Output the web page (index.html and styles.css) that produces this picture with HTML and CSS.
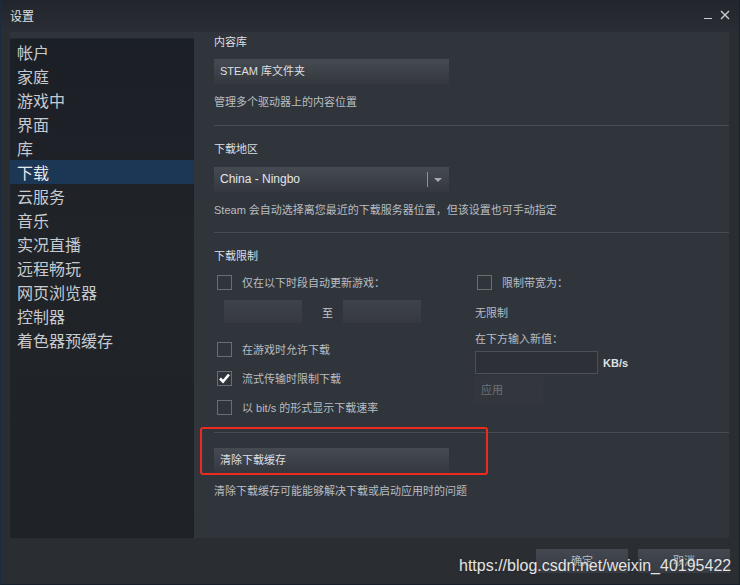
FILE: index.html
```html
<!DOCTYPE html>
<html lang="zh-CN">
<head>
    <meta charset="UTF-8">
    <title>设置</title>
    <link rel="stylesheet" href="styles.css">
</head>
<body>
    <div class="window">
        <div class="titlebar">
            <span class="title">设置</span>
            <div class="controls">
                <span class="min"></span>
                <svg class="close" width="10" height="10" viewBox="0 0 10 10"><path d="M1 1 L9 9 M9 1 L1 9" stroke="#c9ccd0" stroke-width="1.4"/></svg>
            </div>
        </div>

        <div class="main">
            <div class="sidebar">
                <div class="nav-item">帐户</div>
                <div class="nav-item">家庭</div>
                <div class="nav-item">游戏中</div>
                <div class="nav-item">界面</div>
                <div class="nav-item">库</div>
                <div class="nav-item active">下载</div>
                <div class="nav-item">云服务</div>
                <div class="nav-item">音乐</div>
                <div class="nav-item">实况直播</div>
                <div class="nav-item">远程畅玩</div>
                <div class="nav-item">网页浏览器</div>
                <div class="nav-item">控制器</div>
                <div class="nav-item">着色器预缓存</div>
            </div>

            <div class="panel">
                <div class="section first">
                    <div class="heading">内容库</div>
                    <div class="btn wide">STEAM 库文件夹</div>
                    <div class="desc">管理多个驱动器上的内容位置</div>
                </div>
                <div class="sep sep-first"></div>

                <div class="section">
                    <div class="heading">下载地区</div>
                    <div class="btn wide select">
                        <span class="select-text">China - Ningbo</span>
                        <span class="select-divider"></span>
                        <span class="select-arrow"></span>
                    </div>
                    <div class="desc">Steam 会自动选择离您最近的下载服务器位置，但该设置也可手动指定</div>
                </div>
                <div class="sep"></div>

                <div class="section">
                    <div class="heading">下载限制</div>
                    <div class="limits">
                        <div class="col-left">
                            <div class="check-row"><span class="checkbox"></span>仅在以下时段自动更新游戏：</div>
                            <div class="time-row">
                                <span class="time-box"></span>
                                <span class="to">至</span>
                                <span class="time-box"></span>
                            </div>
                            <div class="check-row gap-big"><span class="checkbox"></span>在游戏时允许下载</div>
                            <div class="check-row"><span class="checkbox checked"><svg width="15" height="15" viewBox="0 0 15 15"><path d="M3 7.5 L6 10.5 L12 3.5" fill="none" stroke="#fff" stroke-width="2.6"/></svg></span>流式传输时限制下载</div>
                            <div class="check-row"><span class="checkbox"></span>以 bit/s 的形式显示下载速率</div>
                        </div>
                        <div class="col-right">
                            <div class="check-row"><span class="checkbox"></span>限制带宽为：</div>
                            <div class="plain first-plain">无限制</div>
                            <div class="plain">在下方输入新值：</div>
                            <div class="rate-row">
                                <span class="rate-input"></span>
                                <span class="unit">KB/s</span>
                            </div>
                            <div class="apply">应用</div>
                        </div>
                    </div>
                </div>
                <div class="sep sep-cache"></div>

                <div class="section">
                    <div class="btn wide cache-btn">清除下载缓存</div>
                    <div class="desc">清除下载缓存可能能够解决下载或启动应用时的问题</div>
                </div>
            </div>
        </div>

        <div class="footer">
            <div class="btn foot-btn">确定</div>
            <div class="btn foot-btn">取消</div>
        </div>

        <div class="highlight"></div>
        <div class="watermark">https://blog.csdn.net/weixin_40195422</div>
    </div>
</body>
</html>
```

FILE: styles.css
```css
body {
    margin: 0;
    background-color: #2a2d32;
    font-family: "Liberation Sans", "Noto Sans CJK SC", sans-serif;
}
.window {
    position: relative;
    width: 740px;
    height: 585px;
    box-sizing: border-box;
    border: 1px solid #18202c;
    border-left-color: #1c2b40;
    border-top: none;
    background-color: #2a2d32;
    display: flex;
    flex-direction: column;
}
.titlebar {
    height: 32px;
    flex-shrink: 0;
    background: linear-gradient(#22262c, #2a2d33);
    display: flex;
    align-items: center;
    justify-content: space-between;
    padding: 0 9px 0 9px;
}
.title {
    color: #dfe2e5;
    font-size: 12px;
    margin-top: -1px;
}
.controls {
    display: flex;
    align-items: center;
    gap: 8px;
    margin-top: -3px;
}
.min {
    width: 8px;
    height: 1.5px;
    background-color: #c9ccd0;
    margin-top: 8px;
}
.main {
    height: 506px;
    display: flex;
    padding: 0 10px 0 9px;
}
.sidebar {
    width: 184px;
    flex-shrink: 0;
    padding-top: 8px;
    box-sizing: border-box;
    background: linear-gradient(#2f333a 0, #2f333a 6px, #1b1f26 7px, #202328 200px, #1f2227 100%);
    font-family: "Noto Sans CJK SC", sans-serif;
}
.nav-item {
    height: 24px;
    line-height: 24px;
    padding-left: 7px;
    font-size: 16px;
    color: #c7cbd0;
}
.nav-item.active {
    background-color: #1c3756;
    color: #e4e8ec;
}
.panel {
    flex: 1;
    background-color: #30343b;
    font-size: 11px;
    color: #b9bdc1;
}
.section {
    padding-left: 20px;
}
.section.first {
    padding-top: 2px;
}
.heading {
    line-height: 16px;
    color: #dcdfe2;
    margin-top: 15px;
}
.first .heading {
    margin-top: 0;
}
.btn {
    background: linear-gradient(#464a52, #34383e);
    color: #dcdfe2;
    box-sizing: border-box;
}
.btn.wide {
    width: 235px;
    height: 25px;
    line-height: 25px;
    padding-left: 6px;
    margin-top: 9px;
}
.select {
    position: relative;
    display: flex;
    align-items: center;
    margin-top: 10px !important;
}
.select-text {
    flex: 1;
    font-size: 12px;
    color: #e2e5e8;
}
.select-divider {
    width: 1px;
    height: 15px;
    background-color: #8d9197;
    margin-right: 6px;
}
.select-arrow {
    width: 0;
    height: 0;
    border-left: 4px solid transparent;
    border-right: 4px solid transparent;
    border-top: 4px solid #a6aaaf;
    margin-right: 7px;
}
.desc {
    line-height: 16px;
    margin-top: 10px;
}
.sep {
    height: 1px;
    background-color: #474b52;
    margin: 14px 0 0 20px;
}
.sep.sep-first {
    margin-top: 15px;
}
.limits {
    display: flex;
    align-items: flex-start;
}
.col-left {
    width: 260px;
}
.check-row {
    display: flex;
    align-items: center;
    height: 16px;
    margin-top: 13px;
    padding-left: 3px;
    color: #b9bdc1;
}
.col-left .check-row:first-child,
.col-right .check-row:first-child {
    margin-top: 10px;
}
.check-row.gap-big {
    margin-top: 18px;
}
.checkbox {
    width: 15px;
    height: 15px;
    box-sizing: border-box;
    border: 1px solid #6a6d72;
    margin-right: 10px;
    flex-shrink: 0;
    position: relative;
}
.checkbox svg {
    position: absolute;
    left: -1px;
    top: -1px;
}
.time-row {
    display: flex;
    align-items: center;
    margin-top: 10px;
    padding-left: 10px;
}
.time-box {
    width: 78px;
    height: 23px;
    background: linear-gradient(#3e424a, #363a40);
}
.to {
    width: 41px;
    padding-left: 10px;
    box-sizing: border-box;
    text-align: center;
    color: #c2c6ca;
}
.plain {
    line-height: 16px;
    margin-top: 10px;
    padding-left: 1px;
}
.first-plain {
    margin-top: 15px;
}
.rate-row {
    display: flex;
    align-items: center;
    margin-top: 4px;
    padding-left: 1px;
}
.rate-input {
    width: 123px;
    height: 23px;
    box-sizing: border-box;
    border: 1px solid #4b4f57;
    background-color: #2d3137;
}
.unit {
    margin-left: 5px;
    color: #dfe2e5;
    font-weight: bold;
    font-size: 11px;
}
.apply {
    width: 69px;
    height: 26px;
    line-height: 26px;
    margin-top: 3px;
    padding-left: 7px;
    box-sizing: border-box;
    background-color: #33373d;
    color: #6d7177;
}
.sep-cache {
    margin-top: 17px;
}
.cache-btn {
    margin-top: 15px !important;
}
.footer {
    flex: 1;
    display: flex;
    justify-content: flex-end;
    gap: 10px;
    padding: 11px 9px 0 0;
}
.foot-btn {
    width: 92px;
    height: 24px;
    line-height: 24px;
    text-align: center;
    font-size: 11px;
    color: #b4b9be;
    background: linear-gradient(#434750, #383c43);
}
.highlight {
    position: absolute;
    left: 199px;
    top: 427px;
    width: 288px;
    height: 48px;
    box-sizing: border-box;
    border: 2px solid #ec2a1f;
    border-radius: 3px;
}
.watermark {
    position: absolute;
    left: 458px;
    top: 556px;
    font-size: 16px;
    line-height: 20px;
    color: #e4e4e4;
    text-shadow: 0 0 2px #2a2d32;
}
```
